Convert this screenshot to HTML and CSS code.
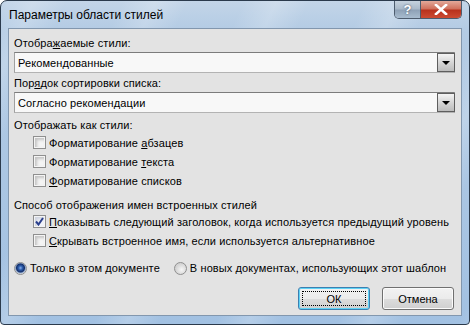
FILE: index.html
```html
<!DOCTYPE html>
<html lang="ru">
  <head>
    <meta charset="UTF-8" />
    <title>Параметры области стилей</title>
    <link rel="stylesheet" href="styles.css">
  </head>
  <body>
    <div class="window">
      <div class="titlebar">
        <span class="title">Параметры области стилей</span>
        <div class="caption">
          <span class="cap-btn help">?</span>
          <span class="cap-btn close">
            <svg width="14" height="11" viewBox="0 0 14 11">
              <path d="M2 1 L12 10 M12 1 L2 10" stroke="#ffffff" stroke-width="2.6" stroke-linecap="square" />
            </svg>
          </span>
        </div>
      </div>

      <div class="client">
        <div class="label">Отобра<u>ж</u>аемые стили:</div>
        <div class="combo">
          <span class="combo-text">Рекомендованные</span>
          <span class="combo-arrow"></span>
        </div>

        <div class="label gap-s">Пор<u>я</u>док сортировки списка:</div>
        <div class="combo">
          <span class="combo-text">Согласно рекомендации</span>
          <span class="combo-arrow"></span>
        </div>

        <div class="label gap-m">Отображать как стили:</div>
        <div class="checks">
          <div class="row"><span class="check"></span><span>Форматирование <u>а</u>бзацев</span></div>
          <div class="row"><span class="check"></span><span>Форматирование <u>т</u>екста</span></div>
          <div class="row"><span class="check"></span><span><u>Ф</u>орматирование списков</span></div>
        </div>

        <div class="label gap-l">Способ отображения имен встроенных стилей</div>
        <div class="checks">
          <div class="row"><span class="check checked">
            <svg width="9" height="9" viewBox="0 0 9 9">
              <path d="M1 4.5 L3.5 7.5 L8 1" fill="none" stroke="#2a3f8c" stroke-width="2" />
            </svg>
          </span><span><u>П</u>оказывать следующий заголовок, когда используется предыдущий уровень</span></div>
          <div class="row"><span class="check"></span><span><u>С</u>крывать встроенное имя, если используется альтернативное</span></div>
        </div>

        <div class="radios">
          <div class="row"><span class="radio on"></span><span>Только в этом документе</span></div>
          <div class="row"><span class="radio"></span><span>В новых документах, использующих этот шаблон</span></div>
        </div>

        <div class="buttons">
          <button type="button" class="btn default"><span class="focus">ОК</span></button>
          <button type="button" class="btn">Отмена</button>
        </div>
      </div>
    </div>
  </body>
</html>
```

FILE: styles.css
```css
body {
  margin: 0;
  background: #ffffff;
  font-family: "Liberation Sans", Arial, sans-serif;
}
.window {
  width: 470px;
  height: 325px;
  box-sizing: border-box;
  display: flex;
  flex-direction: column;
  border: 1px solid #2b3a4c;
  border-radius: 7px 7px 4px 4px;
  background:
    repeating-linear-gradient(115deg, rgba(255, 255, 255, 0) 0px, rgba(255, 255, 255, 0.2) 30px, rgba(255, 255, 255, 0) 60px, rgba(255, 255, 255, 0) 110px),
    linear-gradient(to bottom, #c3d5e8 0px, #b3cbe4 30px, #a2c1e2 100%);
}
.titlebar {
  height: 27px;
  display: flex;
  align-items: flex-start;
  padding: 0 7px 0 8px;
}
.title {
  font-size: 12px;
  color: #000000;
  line-height: 14px;
  margin-top: 7px;
}
.caption {
  margin-left: auto;
  display: flex;
  height: 17px;
  border: 1px solid #4d5c6e;
  border-top: none;
  border-radius: 0 0 5px 5px;
  overflow: hidden;
}
.cap-btn {
  display: flex;
  align-items: center;
  justify-content: center;
  height: 17px;
}
.help {
  width: 25px;
  border-right: 1px solid #4d5c6e;
  background: linear-gradient(to bottom, #c6d2de 0px, #aab9c9 8px, #8ea1b6 9px, #a8bccf 100%);
  color: #ffffff;
  font-size: 13px;
  font-weight: bold;
  text-shadow: 0 0 2px #34465a;
}
.close {
  width: 40px;
  background: linear-gradient(to bottom, #e3a99a 0px, #cf6f5b 8px, #b8311c 9px, #cc4b32 100%);
}
.client {
  flex: 1;
  margin: 0 7px 8px 7px;
  border: 1px solid #8297ae;
  background: #e3e3e3;
  padding: 7px 6px 0 5px;
  font-size: 11px;
  letter-spacing: 0.1px;
  color: #000000;
}
.label {
  height: 14px;
  line-height: 14px;
  margin-bottom: 2px;
}
.gap-s {
  margin-top: 3px;
}
.gap-m {
  margin-top: 5px;
  margin-bottom: 1px;
}
.gap-l {
  margin-top: 8px;
  margin-bottom: 0;
}
.combo {
  height: 21px;
  box-sizing: border-box;
  display: flex;
  align-items: center;
  border: 1px solid;
  border-color: #7c7c7c #a3a3a3 #b3b3b3 #a0a0a0;
  background: #f8f8f8;
}
.combo-text {
  padding-left: 3px;
  flex: 1;
}
.combo-arrow {
  width: 18px;
  height: 19px;
  box-sizing: border-box;
  margin-right: -1px;
  border: 1px solid #5e5e5e;
  background: linear-gradient(to bottom, #f4f4f4, #d6d6d6 50%, #bcbcbc);
  position: relative;
}
.combo-arrow::after {
  content: "";
  position: absolute;
  left: 4px;
  top: 7px;
  border-left: 4px solid transparent;
  border-right: 4px solid transparent;
  border-top: 4px solid #000000;
}
.checks {
  padding-left: 19px;
}
.row {
  height: 19px;
  display: flex;
  align-items: center;
  white-space: nowrap;
}
.check {
  width: 13px;
  height: 13px;
  box-sizing: border-box;
  margin-right: 3px;
  border: 1px solid #8f8f8f;
  background: #f4f4f4;
  box-shadow: inset 0 0 0 1px #f4f4f4, inset 2px 2px 3px 1px #c4c4c4;
  display: flex;
  align-items: center;
  justify-content: center;
}
.checked {
  background: #f1f3f8;
  box-shadow: inset 0 0 0 1px #f4f4f4, inset 2px 2px 3px 1px #cfd4e0;
}
.radios {
  display: flex;
  margin-top: 9px;
}
.radios .row {
  height: 18px;
  margin-right: 14px;
}
.radio {
  width: 13px;
  height: 13px;
  box-sizing: border-box;
  margin-right: 3px;
  border: 1px solid #8f8f8f;
  border-radius: 50%;
  background: radial-gradient(circle at 60% 60%, #f6f6f6 0px, #d3d3d3 6px);
}
.radio.on {
  background: radial-gradient(circle at 50% 45%, #8fb2e8 0px, #2d5fb0 2px, #15306b 4px, #8fa6c8 5px, #e8e8e8 6px);
}
.buttons {
  display: flex;
  justify-content: flex-end;
  gap: 12px;
  margin-top: 10px;
  margin-right: 1px;
}
.btn {
  width: 72px;
  height: 23px;
  padding: 0;
  font-family: "Liberation Sans", Arial, sans-serif;
  font-size: 11px;
  color: #000000;
  border: 1px solid #707070;
  border-radius: 3px;
  background: linear-gradient(to bottom, #f2f2f2 0%, #ebebeb 50%, #dddddd 51%, #cfcfcf 100%);
  box-shadow: inset 0 0 0 1px #fbfbfb;
}
.btn.default {
  border-color: #3c7fb1;
  box-shadow: inset 0 0 0 1px #5fd3f6;
  display: flex;
  padding: 3px;
}
.focus {
  flex: 1;
  display: flex;
  align-items: center;
  justify-content: center;
  border: 1px dotted #000000;
}
```
